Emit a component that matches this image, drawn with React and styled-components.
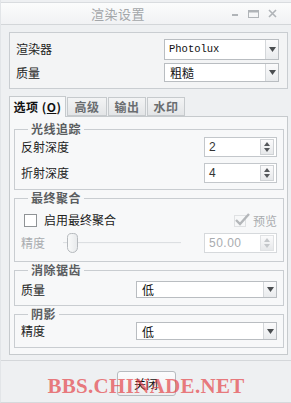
import React from 'react';
import styled, { createGlobalStyle } from 'styled-components';

const Global = createGlobalStyle`
  html, body { margin: 0; padding: 0; background: #ffffff; }
  body {
    font-family: "Noto Sans CJK SC", "Liberation Sans", sans-serif;
    font-size: 12px;
    color: #222;
  }
  * { box-sizing: border-box; }
`;

const Window = styled.div`
  position: relative;
  width: 291px;
  height: 403px;
  background: #eef0f2;
  border-left: 1px solid #e2e5e8;
  border-bottom: 1px solid #d6d9dc;
  display: flex;
  flex-direction: column;
`;

const TitleBar = styled.div`
  margin-top: 2px;
  height: 23px;
  border-top: 1px solid #d9dcdf;
  border-bottom: 1px solid #d3d6d9;
  background: linear-gradient(#fbfcfc, #f1f2f4);
  display: flex;
  align-items: center;
`;

const Title = styled.div`
  flex: 1;
  text-align: center;
  padding-left: 4px;
  font-size: 13px;
  color: #a3a6a9;
  letter-spacing: 0.5px;
`;

const WinButtons = styled.div`
  display: flex;
  align-items: center;
  gap: 9px;
  padding-right: 3px;
  width: 60px;
`;

const Body = styled.div`
  flex: 1;
  padding: 7px 3px 0 8px;
  display: flex;
  flex-direction: column;
`;

const TopPanel = styled.div`
  border: 1px solid #c9cdd1;
  background: #f3f4f5;
  height: 57px;
  padding: 6px 8px 0 6px;
  display: flex;
  flex-direction: column;
  gap: 4px;
`;

const Row = styled.div`
  display: flex;
  align-items: center;
  height: ${(p) => p.$h || 20}px;
  padding-left: ${(p) => p.$indent || 0}px;
`;

const Label = styled.span`
  color: ${(p) => (p.$disabled ? '#a9acaf' : '#222')};
  width: ${(p) => (p.$w ? `${p.$w}px` : 'auto')};
  flex-shrink: 0;
  line-height: 14px;
`;

const SelectBox = styled.div`
  margin-left: auto;
  width: ${(p) => p.$w}px;
  height: ${(p) => p.$h}px;
  border: 1px solid #b9bdc1;
  background: #fff;
  display: flex;
  align-items: stretch;
`;

const SelectText = styled.div`
  flex: 1;
  display: flex;
  align-items: center;
  padding-left: ${(p) => (p.$mono ? 4 : 5)}px;
  font-family: ${(p) =>
    p.$mono ? '"Liberation Mono", monospace' : '"Noto Sans CJK SC", sans-serif'};
  font-size: ${(p) => (p.$mono ? '10.5px' : '12px')};
  color: #111;
`;

const SelectArrow = styled.div`
  width: 13px;
  border-left: 1px solid #d4d7da;
  background: linear-gradient(#fbfbfc, #e9ebed);
  display: flex;
  align-items: center;
  justify-content: center;
`;

const TabBar = styled.div`
  margin-top: 6px;
  display: flex;
  align-items: flex-end;
  gap: 1px;
  height: 21px;
  position: relative;
  z-index: 1;
`;

const Tab = styled.div`
  width: ${(p) => p.$w}px;
  height: ${(p) => (p.$active ? 21 : 19)}px;
  border: 1px solid #c6cacd;
  border-bottom: ${(p) => (p.$active ? 'none' : '1px solid #c6cacd')};
  background: ${(p) =>
    p.$active ? '#f7f8f9' : 'linear-gradient(#f3f4f5, #e3e5e7)'};
  color: ${(p) => (p.$active ? '#111' : '#6a6d70')};
  font-weight: bold;
  display: flex;
  align-items: center;
  justify-content: center;
  margin-bottom: ${(p) => (p.$active ? '-1px' : '0')};
  padding-bottom: ${(p) => (p.$active ? '2px' : '0')};
  letter-spacing: 0.5px;
`;

const Mnemonic = styled.span`
  text-decoration: underline;
`;

const TabPanel = styled.div`
  height: 239px;
  border: 1px solid #c6cacd;
  background: #f7f8f9;
  padding: 5px 3px 0 4px;
  display: flex;
  flex-direction: column;
  gap: 1px;
`;

const Group = styled.fieldset`
  margin: 0;
  border: 1px solid #c9cdd1;
  padding: ${(p) => p.$pt}px 6px ${(p) => p.$pb}px 6px;
  min-width: 0;
  display: flex;
  flex-direction: column;
  gap: ${(p) => p.$gap || 0}px;
`;

const Legend = styled.legend`
  margin-left: 7px;
  padding: 0 3px;
  font-weight: bold;
  color: #5b5e61;
  line-height: 14px;
  letter-spacing: 0.5px;
`;

const Spin = styled.div`
  margin-left: auto;
  width: 73px;
  height: ${(p) => p.$h || 20}px;
  border: 1px solid ${(p) => (p.$disabled ? '#d6d9dc' : '#c3c7cb')};
  background: #fff;
  display: flex;
  align-items: center;
  padding: 1px 2px 1px 4px;
`;

const SpinValue = styled.span`
  flex: 1;
  font-family: "Liberation Sans", sans-serif;
  font-size: 12px;
  color: ${(p) => (p.$disabled ? '#a9acaf' : '#333')};
  letter-spacing: ${(p) => (p.$disabled ? '0.5px' : '0')};
`;

const SpinButtons = styled.div`
  width: 14px;
  height: 100%;
  border: 1px solid ${(p) => (p.$disabled ? '#e0e2e4' : '#cfd2d5')};
  background: linear-gradient(#fbfbfc, #e6e8ea);
  display: flex;
  flex-direction: column;
  align-items: center;
  justify-content: center;
  gap: 2px;
`;

const CheckRow = styled.div`
  display: flex;
  align-items: center;
  height: 18px;
  padding-left: 3px;
`;

const CheckBox = styled.div`
  width: 13px;
  height: 13px;
  border: 1px solid #8f9396;
  background: #fff;
  margin-right: 7px;
`;

const Preview = styled.div`
  margin-left: auto;
  display: flex;
  align-items: center;
  gap: 2px;
  color: #a9acaf;
`;

const SliderTrack = styled.div`
  margin-left: 0;
  width: 118px;
  height: 20px;
  display: flex;
  align-items: center;
  position: relative;
`;

const Groove = styled.div`
  width: 100%;
  height: 2px;
  background: #dcdfe2;
  border-bottom: 1px solid #f4f5f6;
`;

const Thumb = styled.div`
  position: absolute;
  left: 4px;
  top: 0;
  width: 11px;
  height: 20px;
  border: 1px solid #b5b9bd;
  border-radius: 5px 5px 6px 6px;
  background: linear-gradient(90deg, #f9fafa, #e8eaec);
`;

const Footer = styled.div`
  position: relative;
  margin-top: 5px;
  height: 42px;
  border-top: 1px solid #d4d7da;
  margin-left: -8px;
  margin-right: -3px;
  display: flex;
  justify-content: center;
  padding-top: 10px;
`;

const CloseButton = styled.div`
  width: 59px;
  height: 25px;
  border: 1px solid #b7bbbf;
  border-radius: 3px;
  background: linear-gradient(#fcfcfd, #eceef0);
  display: flex;
  align-items: center;
  justify-content: center;
  color: #111;
  font-size: 12px;
`;

const Watermark = styled.div`
  position: absolute;
  left: 0;
  right: 0;
  top: 13px;
  text-align: center;
  font-family: "Liberation Serif", serif;
  font-weight: bold;
  font-size: 21px;
  color: rgba(228, 60, 64, 0.68);
  letter-spacing: 0.3px;
  pointer-events: none;
`;

const Arrow = () => (
  <svg width="7" height="5" viewBox="0 0 7 5">
    <path d="M0 0 H7 L3.5 5 Z" fill="#4a4d50" />
  </svg>
);

const Select = ({ value, w, h, mono }) => (
  <SelectBox $w={w} $h={h}>
    <SelectText $mono={mono}>{value}</SelectText>
    <SelectArrow>
      <Arrow />
    </SelectArrow>
  </SelectBox>
);

const SpinBox = ({ value, disabled, h }) => {
  const c = disabled ? '#c4c7ca' : '#55585b';
  return (
    <Spin $disabled={disabled} $h={h}>
      <SpinValue $disabled={disabled}>{value}</SpinValue>
      <SpinButtons $disabled={disabled}>
        <svg width="6" height="4" viewBox="0 0 6 4">
          <path d="M0 4 H6 L3 0 Z" fill={c} />
        </svg>
        <svg width="6" height="4" viewBox="0 0 6 4">
          <path d="M0 0 H6 L3 4 Z" fill={c} />
        </svg>
      </SpinButtons>
    </Spin>
  );
};

export default function App() {
  return (
    <>
      <Global />
      <Window>
        <TitleBar>
          <Title>渲染设置</Title>
          <WinButtons>
            <svg width="8" height="8" viewBox="0 0 8 8">
              <rect x="1" y="4" width="6" height="2" fill="#b0b4b8" />
            </svg>
            <svg width="11" height="8" viewBox="0 0 11 8">
              <rect x="0.5" y="0.5" width="10" height="7" fill="none" stroke="#b0b4b8" />
              <rect x="0.5" y="0.5" width="10" height="2" fill="#b0b4b8" />
            </svg>
            <svg width="9" height="9" viewBox="0 0 9 9">
              <path d="M1 1 L8 8 M8 1 L1 8" stroke="#b0b4b8" strokeWidth="1.6" />
            </svg>
          </WinButtons>
        </TitleBar>
        <Body>
          <TopPanel>
            <Row>
              <Label>渲染器</Label>
              <Select value="Photolux" w={115} h={21} mono />
            </Row>
            <Row $h={19}>
              <Label>质量</Label>
              <Select value="粗糙" w={115} h={19} />
            </Row>
          </TopPanel>

          <TabBar>
            <Tab $active $w={57}>
              选项 (<Mnemonic>O</Mnemonic>)
            </Tab>
            <Tab $w={40}>高级</Tab>
            <Tab $w={38}>输出</Tab>
            <Tab $w={38}>水印</Tab>
          </TabBar>
          <TabPanel>
            <Group $pt={1} $pb={6} $gap={6}>
              <Legend>光线追踪</Legend>
              <Row>
                <Label>反射深度</Label>
                <SpinBox value="2" />
              </Row>
              <Row>
                <Label>折射深度</Label>
                <SpinBox value="4" />
              </Row>
            </Group>

            <Group $pt={6} $pb={8} $gap={4}>
              <Legend>最终聚合</Legend>
              <CheckRow>
                <CheckBox />
                <Label>启用最终聚合</Label>
                <Preview>
                  <svg width="17" height="14" viewBox="0 0 17 14">
                    <rect x="0.5" y="2.5" width="11" height="11" fill="none" stroke="#dfe1e3" />
                    <path d="M2 7 L6 11 L15 1" fill="none" stroke="#b4b7ba" strokeWidth="2.4" />
                  </svg>
                  <span>预览</span>
                </Preview>
              </CheckRow>
              <Row>
                <Label $disabled $w={42}>精度</Label>
                <SliderTrack>
                  <Groove />
                  <Thumb />
                </SliderTrack>
                <SpinBox value="50.00" disabled />
              </Row>
            </Group>

            <Group $pt={4} $pb={7}>
              <Legend>消除锯齿</Legend>
              <Row $h={17}>
                <Label>质量</Label>
                <Select value="低" w={141} h={17} />
              </Row>
            </Group>

            <Group $pt={1} $pb={7}>
              <Legend>阴影</Legend>
              <Row $h={18}>
                <Label>精度</Label>
                <Select value="低" w={141} h={18} />
              </Row>
            </Group>
          </TabPanel>

          <Footer>
            <CloseButton>关闭</CloseButton>
            <Watermark>BBS.CHINADE.NET</Watermark>
          </Footer>
        </Body>
      </Window>
    </>
  );
}
